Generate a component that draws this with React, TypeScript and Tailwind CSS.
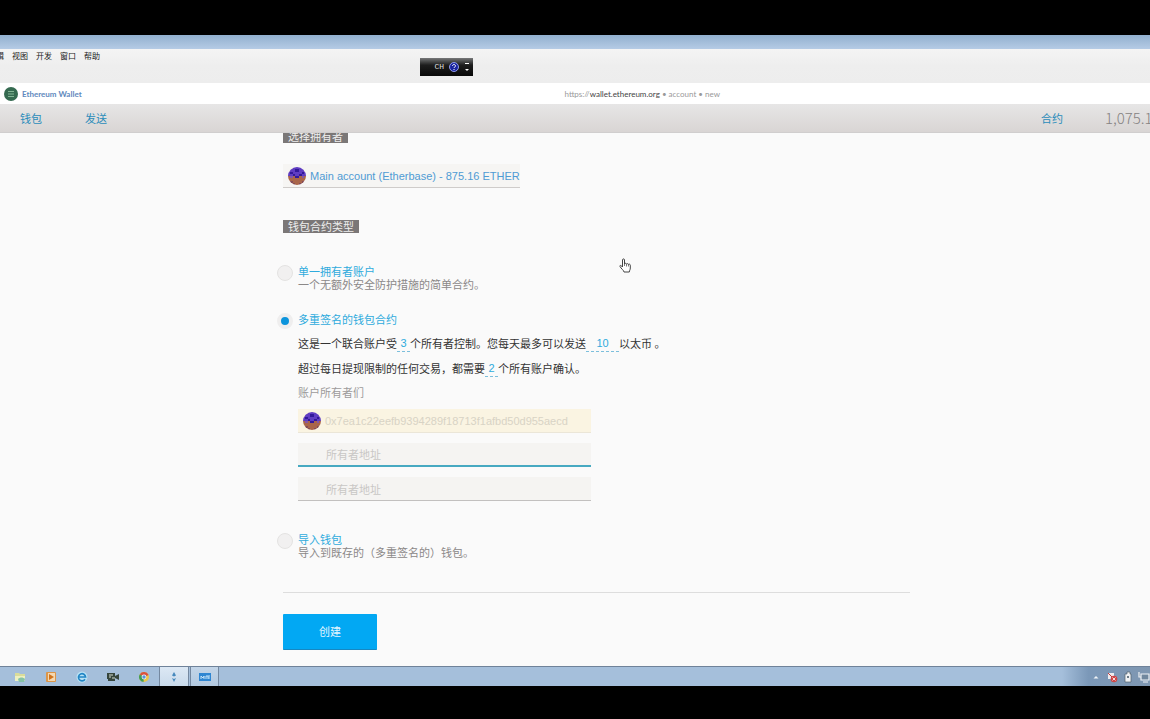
import { useState } from 'react';

const menuItems = ['编辑', '视图', '开发', '窗口', '帮助'];

// 8x8 identicon, one letter per colour
const identiconRows = [
  'bbppppbb',
  'bppddppb',
  'pdppppdp',
  'ppdppdpp',
  'rbrddrbr',
  'rrrrrrrr',
  'rorrrror',
  'rrorrorr',
];

const identiconColors: Record<string, string> = {
  p: '#5f3cc2',
  b: '#8558a4',
  d: '#32199a',
  r: '#a9654a',
  o: '#854c58',
};

function Identicon() {
  return (
    <svg viewBox="0 0 8 8" className="size-[18px] shrink-0 rounded-full" shapeRendering="crispEdges" aria-hidden="true">
      {identiconRows.map((row, y) =>
        row.split('').map((c, x) => (
          <rect key={`${x}-${y}`} x={x} y={y} width="1" height="1" fill={identiconColors[c]} />
        )),
      )}
    </svg>
  );
}

function SectionLabel({ children }: { children: string }) {
  return (
    <h2 className="w-fit bg-[#7b7777] px-[5px] text-[11px] leading-[13px] text-[#eeeeee]">{children}</h2>
  );
}

type OptionProps = {
  value: string;
  title: string;
  description?: string;
  selected: string;
  onSelect: (value: string) => void;
};

function WalletOption({ value, title, description, selected, onSelect }: OptionProps) {
  return (
    <div className="flex gap-[5px]">
      <input
        type="radio"
        id={value}
        name="walletType"
        checked={selected === value}
        onChange={() => onSelect(value)}
        className="size-4 shrink-0 appearance-none rounded-full border border-[#e4e3e2] bg-[#f1f0f0] checked:border-4 checked:border-[#efeeee] checked:bg-[#0c94dc]"
      />
      <label htmlFor={value} className="block text-[11px] leading-[13px] text-[#2fabdd]">
        {title}
        {description && <span className="block text-[#8b8888]">{description}</span>}
      </label>
    </div>
  );
}

const inlineInput =
  'h-4 border-b border-dashed border-[#7cbfdc] text-center font-["Liberation_Sans",sans-serif] text-[11px] text-[#2fabdd] outline-none';

const ownerInput =
  'h-6 w-full bg-[#f5f4f2] pl-7 text-[11px] text-[#c9c6c0] placeholder:text-[#c9c7c5] outline-none';

function FolderIcon() {
  return (
    <svg viewBox="0 0 12 12" className="size-3">
      <path d="M1 2h4l1 1h5v7H1z" fill="#d9dc9a" />
      <path d="M1 5h10v5H1z" fill="#eef0c0" />
      <path d="M4 8c2-2 5-2 7 0l-1 3H5z" fill="#86c3a8" />
    </svg>
  );
}

function PlayerIcon() {
  return (
    <svg viewBox="0 0 12 12" className="size-3">
      <rect x="1" y="1" width="10" height="10" rx="1" fill="#dc9548" />
      <rect x="3" y="2" width="7" height="8" fill="#f3d8b2" />
      <path d="M4 3l5 3-5 3z" fill="#d0731c" />
    </svg>
  );
}

function IeIcon() {
  return (
    <svg viewBox="0 0 12 12" className="size-3">
      <circle cx="6" cy="6" r="5.5" fill="#b9e2f5" />
      <path d="M9 8.3A3.6 3.6 0 1 1 9.6 6H3" fill="none" stroke="#2185c5" strokeWidth="1.6" />
    </svg>
  );
}

function CameraIcon() {
  return (
    <svg viewBox="0 0 12 12" className="size-3">
      <path d="M0 2h8v8H1V8H0z" fill="#35453d" />
      <path d="M8 5l4-2v6l-4-2z" fill="#35453d" />
      <path d="M2 4h4M2 6h2M5 7h3" stroke="#d4dcd0" />
    </svg>
  );
}

function ChromeIcon() {
  return (
    <svg viewBox="0 0 12 12" className="size-3">
      <circle cx="6" cy="6" r="5" fill="#e9c84b" />
      <path d="M6 6L1.7 3.5A5 5 0 0 1 10.6 4z" fill="#d9523f" />
      <path d="M6 6L1.7 3.5A5 5 0 0 0 5.5 11z" fill="#3f9d58" />
      <circle cx="6" cy="6" r="2.4" fill="#f4f7fb" />
      <circle cx="6" cy="6" r="1.7" fill="#5b93d8" />
    </svg>
  );
}

const launchers = [
  { name: '资源管理器', icon: <FolderIcon /> },
  { name: '媒体播放器', icon: <PlayerIcon /> },
  { name: 'Internet Explorer', icon: <IeIcon /> },
  { name: '录像', icon: <CameraIcon /> },
  { name: 'Chrome', icon: <ChromeIcon /> },
];

function Taskbar() {
  return (
    <footer className="flex h-5 border-t border-[#6f8299] bg-[#a5bfdb] pl-1">
      {launchers.map((item) => (
        <button key={item.name} aria-label={item.name} className="flex w-[31px] items-center justify-center">
          {item.icon}
        </button>
      ))}
      <div className="flex gap-px">
        <button aria-label="Ethereum Wallet" className="flex w-[30px] items-center justify-center border-x border-[#7488a0] bg-linear-to-b from-[#dce8f4] to-[#c9daeb]">
          <svg viewBox="0 0 12 12" className="size-3">
            <path d="M6 1l2 3.5-2 1-2-1zM4 7l2 1 2-1-2 4z" fill="#4789bd" />
          </svg>
        </button>
        <button aria-label="录屏" className="flex w-[29px] items-center justify-center border-x border-[#7488a0] bg-linear-to-b from-[#c3d5e8] to-[#b2c9e0]">
          <svg viewBox="0 0 12 10" className="h-[10px] w-3">
            <rect y="1" width="12" height="8" fill="#2f86d2" />
            <path d="M2 7V4l2 2 1-2v3M7 7V4h2v3M10 3v4" fill="none" stroke="#c7e4f8" />
          </svg>
        </button>
      </div>
      <div className="ml-auto flex w-[88px] items-center justify-end gap-1 bg-linear-to-r from-[#a5bfdb] via-[#7b98b8] via-30% to-[#7f97b1]">
        <svg viewBox="0 0 12 12" className="size-3 shrink-0">
          <path d="M3.500 7.500L6 5l2.500 2.500z" fill="#f0f4f8" />
        </svg>
        <svg viewBox="0 0 12 12" className="size-3 shrink-0">
          <path d="M2 2h6v6H2z" fill="#eceff2" />
          <circle cx="8" cy="8" r="3.300" fill="#cf4545" />
          <path d="M6.500 6.500l3 3m0-3l-3 3M2 4h5" stroke="#f7dcdc" />
          <path d="M2 2l4 4" stroke="#c03b3b" />
        </svg>
        <svg viewBox="0 0 12 12" className="size-3 shrink-0">
          <path d="M3 3h2V1h3v2h1v8H3z" fill="#eef1f3" stroke="#53626f" strokeWidth=".7" />
          <path d="M5 5h2v2H5z" fill="#6d7c88" />
        </svg>
        <svg viewBox="0 0 12 12" className="size-3 shrink-0">
          <path d="M3 3h8v6H3zM5 11h5M1 1v5h2" fill="#71889e" stroke="#eef2f5" strokeWidth="1.200" />
        </svg>
      </div>
    </footer>
  );
}

export default function App() {
  const [walletType, setWalletType] = useState('multisig');

  return (
    <div className="relative flex min-h-screen flex-col overflow-hidden bg-black pb-[33px] pt-[35px] font-['Noto_Sans_CJK_SC',sans-serif]">
      {/* Window title and menu */}
      <div className="h-[14px] bg-linear-to-b from-[#92b0cf] to-[#b5cbe5]" />
      <div className="h-[34px] bg-linear-to-b from-[#f4f4f4] via-[#eeeeee] to-[#ededed]">
        <ul className="-ml-3 flex gap-2 text-[8px] leading-[14px] text-[#222222]">
          {menuItems.map((item) => (
            <li key={item}>{item}</li>
          ))}
        </ul>
      </div>

      {/* Address bar */}
      <div className="flex h-[21px] items-center bg-white font-['Lato',sans-serif] text-[8px]">
        <div className="flex flex-1 items-center gap-1 pl-1">
          <svg viewBox="0 0 14 14" className="size-[14px]">
            <circle cx="7" cy="7" r="7" fill="#356a50" />
            <path d="M4 4.500h6M4 7h6M4 9.500h6" stroke="#84b695" strokeWidth="1" />
          </svg>
          <span className="font-bold text-[#6189bd]">Ethereum Wallet</span>
        </div>
        <p className="mr-[430px] whitespace-nowrap text-[#999999]">
          https://<span className="text-[#444444]">wallet.ethereum.org</span> • account • new
        </p>
      </div>

      {/* Wallet navigation */}
      <nav className="relative z-10 flex h-[29px] items-center border-b border-[#d0cece] bg-linear-to-b from-[#e7e6e6] to-[#d9d5d4] pl-5 text-[11px] text-[#2b8cba]">
        <a href="#wallets">钱包</a>
        <a href="#send" className="ml-[43px]">发送</a>
        <a href="#contracts" className="ml-auto">合约</a>
        <span className="ml-[42px] w-[45px] whitespace-nowrap text-[15px] font-light text-[#858282]">1,075.16</span>
      </nav>

      <main className="flex-1 bg-[#fafafa] pl-[283px]">
        <form className="-mt-[3px] w-full max-w-[627px] pb-[15px]" onSubmit={(e) => e.preventDefault()}>
          <SectionLabel>选择拥有者</SectionLabel>
          <div className="mt-[21px] flex h-6 w-fit items-center border-b border-[#cfccca] bg-[#f6f5f3] pl-[5px]">
            <Identicon />
            <select
              aria-label="选择拥有者"
              className="h-full appearance-none pl-1 pt-px font-['Liberation_Sans',sans-serif] text-[11px] text-[#4f9bd3] outline-none"
            >
              <option>Main account (Etherbase) - 875.16 ETHER</option>
            </select>
          </div>

          <div className="mt-8">
            <SectionLabel>钱包合约类型</SectionLabel>
          </div>

          <div className="-ml-[6px] mt-8">
            <WalletOption
              value="simple"
              title="单一拥有者账户"
              description="一个无额外安全防护措施的简单合约。"
              selected={walletType}
              onSelect={setWalletType}
            />
            <div className="mt-[22px]">
              <WalletOption value="multisig" title="多重签名的钱包合约" selected={walletType} onSelect={setWalletType} />
            </div>

            <div className="pl-[21px] text-[11px] text-[#333333]">
              <p className="mt-0.5 flex h-[25px] items-center whitespace-nowrap">
                这是一个联合账户受
                <input aria-label="所有者数量" defaultValue="3" className={`${inlineInput} w-[13px]`} />
                个所有者控制。您每天最多可以发送
                <input aria-label="每日限额" defaultValue="10" className={`${inlineInput} w-[33px]`} />
                以太币 。
              </p>
              <p className="flex h-[25px] items-center whitespace-nowrap">
                超过每日提现限制的任何交易，都需要
                <input aria-label="确认数量" defaultValue="2" className={`${inlineInput} w-[13px]`} />
                个所有账户确认。
              </p>
              <h3 className="mt-1 leading-[14px] text-[#9d9a9a]">账户所有者们</h3>
              <div className="mt-[10px] flex w-[293px] flex-col gap-[10px]">
                <div className="flex h-6 items-center border-b border-[#ebe6d8] bg-[#faf4e2] pl-[5px]">
                  <Identicon />
                  <input
                    aria-label="所有者地址 1"
                    disabled
                    defaultValue="0x7ea1c22eefb9394289f18713f1afbd50d955aecd"
                    className="h-full min-w-0 flex-1 pl-1 pt-px font-['Liberation_Sans',sans-serif] text-[11px] text-[#d8d3c5]"
                  />
                </div>
                <input aria-label="所有者地址 2" placeholder="所有者地址" className={`${ownerInput} border-b-2 border-[#47a9c1]`} />
                <input aria-label="所有者地址 3" placeholder="所有者地址" className={`${ownerInput} border-b border-[#c2c0bf]`} />
              </div>
            </div>

            <div className="mt-8">
              <WalletOption
                value="import"
                title="导入钱包"
                description="导入到既存的（多重签名的）钱包。"
                selected={walletType}
                onSelect={setWalletType}
              />
            </div>
          </div>

          <hr className="mt-[33px] border-[#dddddd]" />
          <button
            type="submit"
            className="mt-[21px] h-9 w-[94px] rounded-[1px] border-b border-[#1688c2] bg-[#02a8f3] text-[11px] text-[#e4f6ff]"
          >
            创建
          </button>
        </form>
      </main>

      <Taskbar />

      {/* Floating language bar */}
      <div className="absolute left-[420px] top-[58px] flex h-[18px] w-[53px] items-center justify-end gap-[5px] bg-linear-to-b from-[#77797a] via-[#1d1d1d] via-40% to-[#080808] pr-[3px] font-['Liberation_Mono',monospace] text-[8px] text-[#dddddd]">
        <span>CH</span>
        <svg viewBox="0 0 10 10" className="size-[10px]">
          <circle cx="5" cy="5" r="4.500" fill="#1b25a0" stroke="#8f9be8" />
          <path d="M3.500 4c0-2 3-2 3 0 0 1-1.500 1-1.500 2M5 7v1" fill="none" stroke="#ffffff" />
        </svg>
        <svg viewBox="0 0 6 10" className="h-[10px] w-[6px]">
          <path d="M1 1.500h4" stroke="#ffffff" />
          <path d="M1 7h4L3 9z" fill="#ffffff" />
        </svg>
      </div>

      {/* Pointer */}
      <svg viewBox="0 0 12 15" className="absolute left-[619px] top-[258px] h-[15px] w-3" aria-hidden="true">
        <path
          d="M3.500 9V2c0-1.500 2-1.500 2 0v4c0-1 2-1 2 .3 0-1 2-.9 2 .3 0-.8 1.800-.6 1.800.6V10c0 2-1 2.500-1 4H5c0-1.500-3-3.500-4-5.500C.5 7 2 7 3.500 9z"
          fill="#ffffff"
          stroke="#444444"
        />
        <path d="M5.500 6v2M7.500 6.500v2M9.500 7v1.500" stroke="#444444" strokeWidth=".7" />
      </svg>
    </div>
  );
}
